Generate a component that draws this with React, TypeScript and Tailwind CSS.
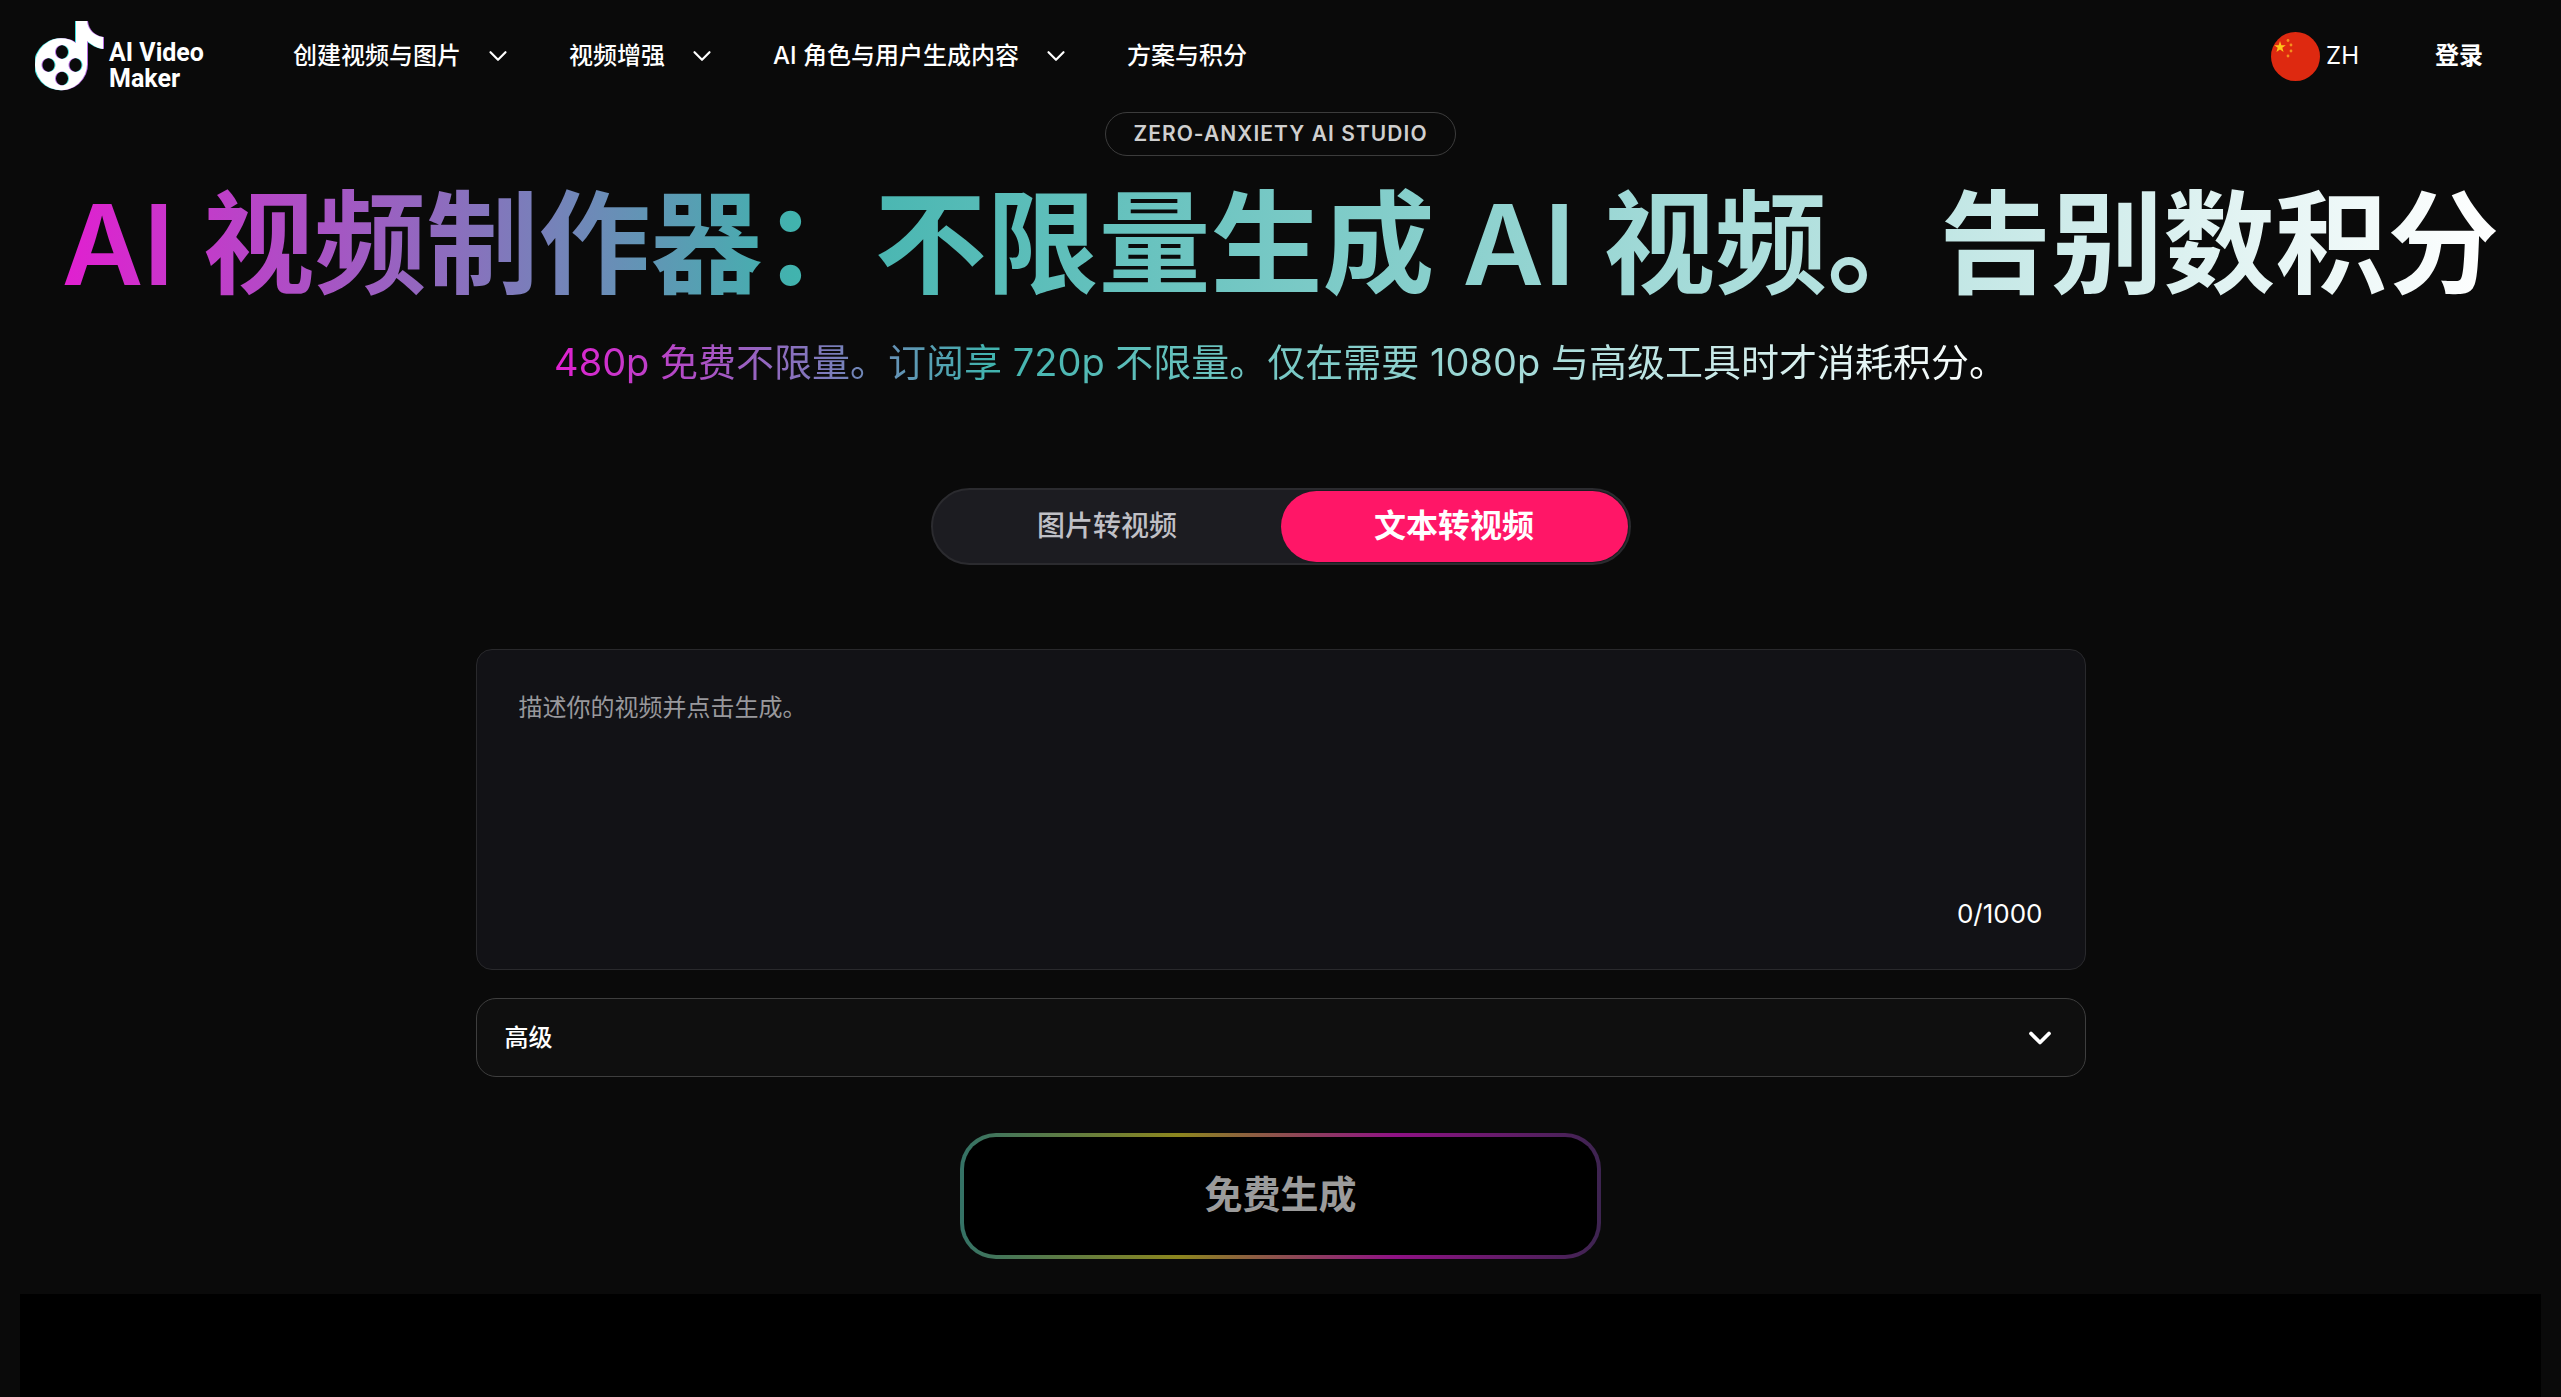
import { useState } from 'react';
import { ChevronDown } from 'lucide-react';
import clsx from 'clsx';

type Mode = 'image' | 'text';

const MAX_LENGTH = 1000;

const NAV_ITEMS = [
  { label: '创建视频与图片', hasMenu: true },
  { label: '视频增强', hasMenu: true },
  { label: 'AI 角色与用户生成内容', hasMenu: true },
  { label: '方案与积分', hasMenu: false },
];

const TABS: { value: Mode; label: string }[] = [
  { value: 'image', label: '图片转视频' },
  { value: 'text', label: '文本转视频' },
];

function LogoShape({ fill }: { fill: string }) {
  return (
    <path
      fill={fill}
      fillRule="evenodd"
      d="M40 0H51C52 9 58 15 67 16V28C61 27 56 24 51 20V42A26 26 0 1 1 40 22ZM26 24a7 7 0 1 0 .01 0ZM12.500 37a7 7 0 1 0 .01 0ZM39.500 37a7 7 0 1 0 .01 0ZM26 50.500a7 7 0 1 0 .01 0Z"
    />
  );
}

function Logo() {
  return (
    <a href="#" className="flex items-start text-white">
      <svg width="70" height="72" viewBox="-1 -1 70 72" aria-hidden="true">
        <g transform="translate(-1 0)">
          <LogoShape fill="#3fe0e0" />
        </g>
        <g transform="translate(1 0)">
          <LogoShape fill="#b76be0" />
        </g>
        <LogoShape fill="#ffffff" />
      </svg>
      <span className="mt-5 ml-1 w-[100px] font-['Roboto',sans-serif] text-[25px] leading-[26px] font-bold">
        AI Video
        <br />
        Maker
      </span>
    </a>
  );
}

function ChinaFlag() {
  return (
    <svg width="49" height="49" viewBox="0 0 49 49" aria-hidden="true">
      <circle cx="24.500" cy="24.500" r="24.500" fill="#de2910" />
      <path fill="#ffc61a" d="M9 9l1.400 4.200h4.400l-3.500 2.600 1.300 4.200L9 17.400 5.400 20l1.300-4.200-3.500-2.600h4.400z" />
      <g fill="#f5901e">
        <circle cx="17" cy="8.500" r="1.400" />
        <circle cx="20" cy="13" r="1.400" />
        <circle cx="20" cy="19" r="1.400" />
        <circle cx="17" cy="24" r="1.400" />
      </g>
    </svg>
  );
}

function Header() {
  return (
    <header className="flex h-28 items-center pr-[78px] pl-[35px]">
      <Logo />
      <nav className="ml-[84px] flex flex-1 items-center gap-14">
        {NAV_ITEMS.map((item) =>
          item.hasMenu ? (
            <button key={item.label} type="button" className="flex items-center gap-[22px] text-[24px] font-medium">
              {item.label}
              <ChevronDown size={30} strokeWidth={1.750} />
            </button>
          ) : (
            <a key={item.label} href="#" className="text-[24px] font-medium">
              {item.label}
            </a>
          )
        )}
      </nav>
      <button type="button" className="flex items-center gap-1.5 text-[24px]">
        <ChinaFlag />
        ZH
      </button>
      <a href="#" className="ml-[76px] text-[24px] font-bold">
        登录
      </a>
    </header>
  );
}

export default function App() {
  const [mode, setMode] = useState<Mode>('text');
  const [prompt, setPrompt] = useState('');

  return (
    <div className="flex min-h-screen flex-col bg-[#0a0a0a] font-['Inter','Noto_Sans_CJK_SC',sans-serif] text-white">
      <Header />

      <main className="flex flex-1 flex-col items-center px-5">
        <p className="rounded-full border border-[#3c3c3c] px-[27px] py-1.5 text-[21px] leading-[30px] font-semibold tracking-wider text-[#cfcfcf]">
          ZERO-ANXIETY AI STUDIO
        </p>

        <h1 className="mt-[18px] bg-linear-to-r/srgb from-[#e11fd0] via-[#41b3ae] via-30% to-white bg-clip-text text-center text-[112px] leading-[140px] font-semibold text-transparent">
          AI 视频制作器：不限量生成 AI 视频。告别数积分
        </h1>
        <p className="mt-5 bg-linear-to-r/srgb from-[#e11fd0] via-[#41b3ae] via-30% to-white bg-clip-text text-center text-[38px] leading-[56px] text-transparent">
          480p 免费不限量。订阅享 720p 不限量。仅在需要 1080p 与高级工具时才消耗积分。
        </p>

        {/* 模式切换 */}
        <div
          role="tablist"
          className="mt-[98px] grid w-full max-w-[700px] grid-cols-2 rounded-full border-2 border-[#2b2b2f] bg-[#1c1c21] p-px"
        >
          {TABS.map((tab) => (
            <button
              key={tab.value}
              type="button"
              role="tab"
              aria-selected={mode === tab.value}
              onClick={() => setMode(tab.value)}
              className={clsx(
                'h-[71px] rounded-full pb-0.5',
                mode === tab.value
                  ? 'bg-[#ff1667] text-[32px] font-bold text-white'
                  : 'text-[28px] font-medium text-[#c0c0c6]'
              )}
            >
              {tab.label}
            </button>
          ))}
        </div>

        <div className="mt-[84px] w-full max-w-[1610px]">
          <div className="flex flex-col rounded-2xl border border-[#29292c] bg-[#121216] px-[42px] pt-10 pb-[35px]">
            <textarea
              value={prompt}
              onChange={(e) => setPrompt(e.target.value)}
              maxLength={MAX_LENGTH}
              aria-label="视频描述"
              placeholder="描述你的视频并点击生成。"
              className="h-[204px] resize-none text-[24px] leading-9 outline-none placeholder:text-[#98989c]"
            />
            <span className="self-end text-[26px] leading-10">
              {prompt.length}/{MAX_LENGTH}
            </span>
          </div>

          <button
            type="button"
            className="mt-7 flex h-[79px] w-full items-center justify-between rounded-[20px] border border-[#3e3e3e] bg-[#0f0f0f] pr-[27px] pl-7 text-[24px] font-medium"
          >
            高级
            <ChevronDown size={36} strokeWidth={2.500} />
          </button>
        </div>

        {/* 渐变描边按钮 */}
        <button
          type="button"
          className="mt-14 w-full max-w-[641px] rounded-[36px] bg-[linear-gradient(90deg,#347266,#8c861e_34%,#8f1285_68%,#3d2450)] p-1"
        >
          <span className="flex h-[118px] items-center justify-center rounded-[32px] bg-black pb-1 text-[38px] font-bold text-[#9b9b9b]">
            免费生成
          </span>
        </button>

        <section className="mt-[35px] w-full flex-1 bg-black" />
      </main>
    </div>
  );
}
